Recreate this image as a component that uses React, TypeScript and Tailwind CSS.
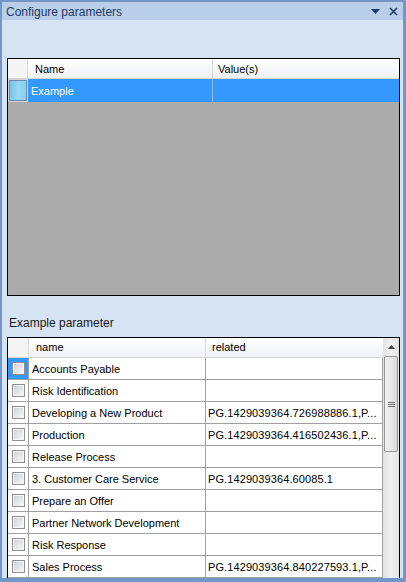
import React from "react";

const rows: [string, string][] = [
  ["Accounts Payable", ""],
  ["Risk Identification", ""],
  ["Developing a New Product", "PG.1429039364.726988886.1,P..."],
  ["Production", "PG.1429039364.416502436.1,P..."],
  ["Release Process", ""],
  ["3. Customer Care Service", "PG.1429039364.60085.1"],
  ["Prepare an Offer", ""],
  ["Partner Network Development", ""],
  ["Risk Response", ""],
  ["Sales Process", "PG.1429039364.840227593.1,P..."],
  ["", ""],
];

function Checkbox() {
  return (
    <div className="w-[13px] h-[13px] border border-[#8e8f8f] bg-[#f4f4f4] p-[1px]">
      <div className="w-full h-full bg-gradient-to-br from-[#d0d3d8] to-[#f7f7f7]" />
    </div>
  );
}

export default function App() {
  return (
    <div className="w-[406px] h-[582px] flex flex-col overflow-hidden bg-[#d5e3f3] border-[#7396c9] border-l-2 border-r-[3px] border-t-2 border-b-4 font-['Liberation_Sans',Arial,sans-serif] text-black">
      {/* Title bar */}
      <div className="h-[18px] shrink-0 bg-[#b9cfe9] flex items-center pl-[4px] pr-[4px] pt-[1px] text-[12px] leading-[16px] text-[#1e3a68]">
        <span>Configure parameters</span>
        <div className="flex-1" />
        <svg width="10" height="6" viewBox="0 0 10 6" className="mr-[8px] mt-[1px]">
          <path d="M0 0 H9 L4.5 5 Z" fill="#1e3a68" />
        </svg>
        <svg width="9" height="9" viewBox="0 0 9 9" className="mr-[1px]">
          <path d="M1 1 L8 8 M8 1 L1 8" stroke="#1e3a68" strokeWidth="1.6" />
        </svg>
      </div>

      {/* Body */}
      <div className="flex-1 flex flex-col pl-[5px] pr-[3px] pt-[38px] overflow-hidden">
        {/* Top grid */}
        <div className="h-[238px] shrink-0 border border-black bg-[#ababab] flex flex-col text-[11px]">
          <div className="h-[20px] flex bg-gradient-to-b from-white to-[#f1f2f4] border-b border-[#d5d5d5]">
            <div className="w-[20px] border-r border-[#dadada] bg-[#f5f5f5]" />
            <div className="w-[185px] border-r border-[#dadada] pl-[7px] pt-[2px] flex items-center">Name</div>
            <div className="flex-1 pl-[5px] pt-[2px] flex items-center">Value(s)</div>
          </div>
          <div className="h-[23px] flex bg-[#3399ff] text-white">
            <div className="w-[20px] bg-[#d5d5d5] p-[1px]">
              <div className="w-full h-full border border-[#5e90b3] bg-gradient-to-r from-[#78c4ec] via-[#99d6f5] to-[#8ccdf0]" />
            </div>
            <div className="w-[185px] border-r border-[#8fbbe8] pl-[3px] pt-[1px] flex items-center">Example</div>
            <div className="flex-1" />
          </div>
        </div>

        {/* Label */}
        <div className="h-[41px] shrink-0 pt-[19px] pl-[2px] text-[12px] leading-[16px] text-[#1a1a1a]">
          Example parameter
        </div>

        {/* Bottom grid */}
        <div className="flex-1 border-t border-l border-r border-black bg-white flex overflow-hidden text-[11px]">
          <div className="w-[375px] flex flex-col">
            <div className="h-[20px] shrink-0 flex bg-gradient-to-b from-white to-[#f1f2f4] border-b border-[#d5d5d5]">
              <div className="w-[21px] border-r border-[#dadada] bg-[#f5f5f5]" />
              <div className="w-[177px] border-r border-[#dadada] pl-[7px] flex items-center">name</div>
              <div className="flex-1 pl-[6px] flex items-center">related</div>
            </div>
            {rows.map(([n, r], i) => (
              <div key={i} className="h-[22px] shrink-0 flex border-b border-[#a0a0a0]">
                <div
                  className={
                    "w-[21px] border-r border-[#a0a0a0] flex items-center justify-center " +
                    (i === 0 ? "bg-[#3399ff]" : "")
                  }
                >
                  <Checkbox />
                </div>
                <div className="w-[177px] border-r border-[#a0a0a0] pl-[3px] pt-[1px] flex items-center whitespace-nowrap overflow-hidden">
                  {n}
                </div>
                <div className="flex-1 border-r border-[#a0a0a0] pl-[2px] pt-[1px] flex items-center whitespace-nowrap overflow-hidden tracking-[0.1px]">
                  {r}
                </div>
              </div>
            ))}
          </div>
          {/* Scrollbar */}
          <div className="w-[16px] flex flex-col bg-gradient-to-r from-[#e3e3e3] via-[#f0f0f0] to-[#e3e3e3]">
            <div className="h-[18px] flex items-center justify-center">
              <svg width="7" height="4" viewBox="0 0 7 4">
                <path d="M0 4 L3.5 0 L7 4 Z" fill="#404040" />
              </svg>
            </div>
            <div className="mx-[1px] h-[96px] rounded-[2px] border border-[#979797] bg-gradient-to-r from-[#f2f2f2] via-[#e8e8e8] to-[#d8d8d8] flex flex-col items-center justify-center gap-[1px]">
              <div className="w-[7px] h-[1px] bg-[#6e6e6e]" />
              <div className="w-[7px] h-[1px] bg-[#6e6e6e]" />
              <div className="w-[7px] h-[1px] bg-[#6e6e6e]" />
            </div>
          </div>
        </div>
      </div>
    </div>
  );
}
